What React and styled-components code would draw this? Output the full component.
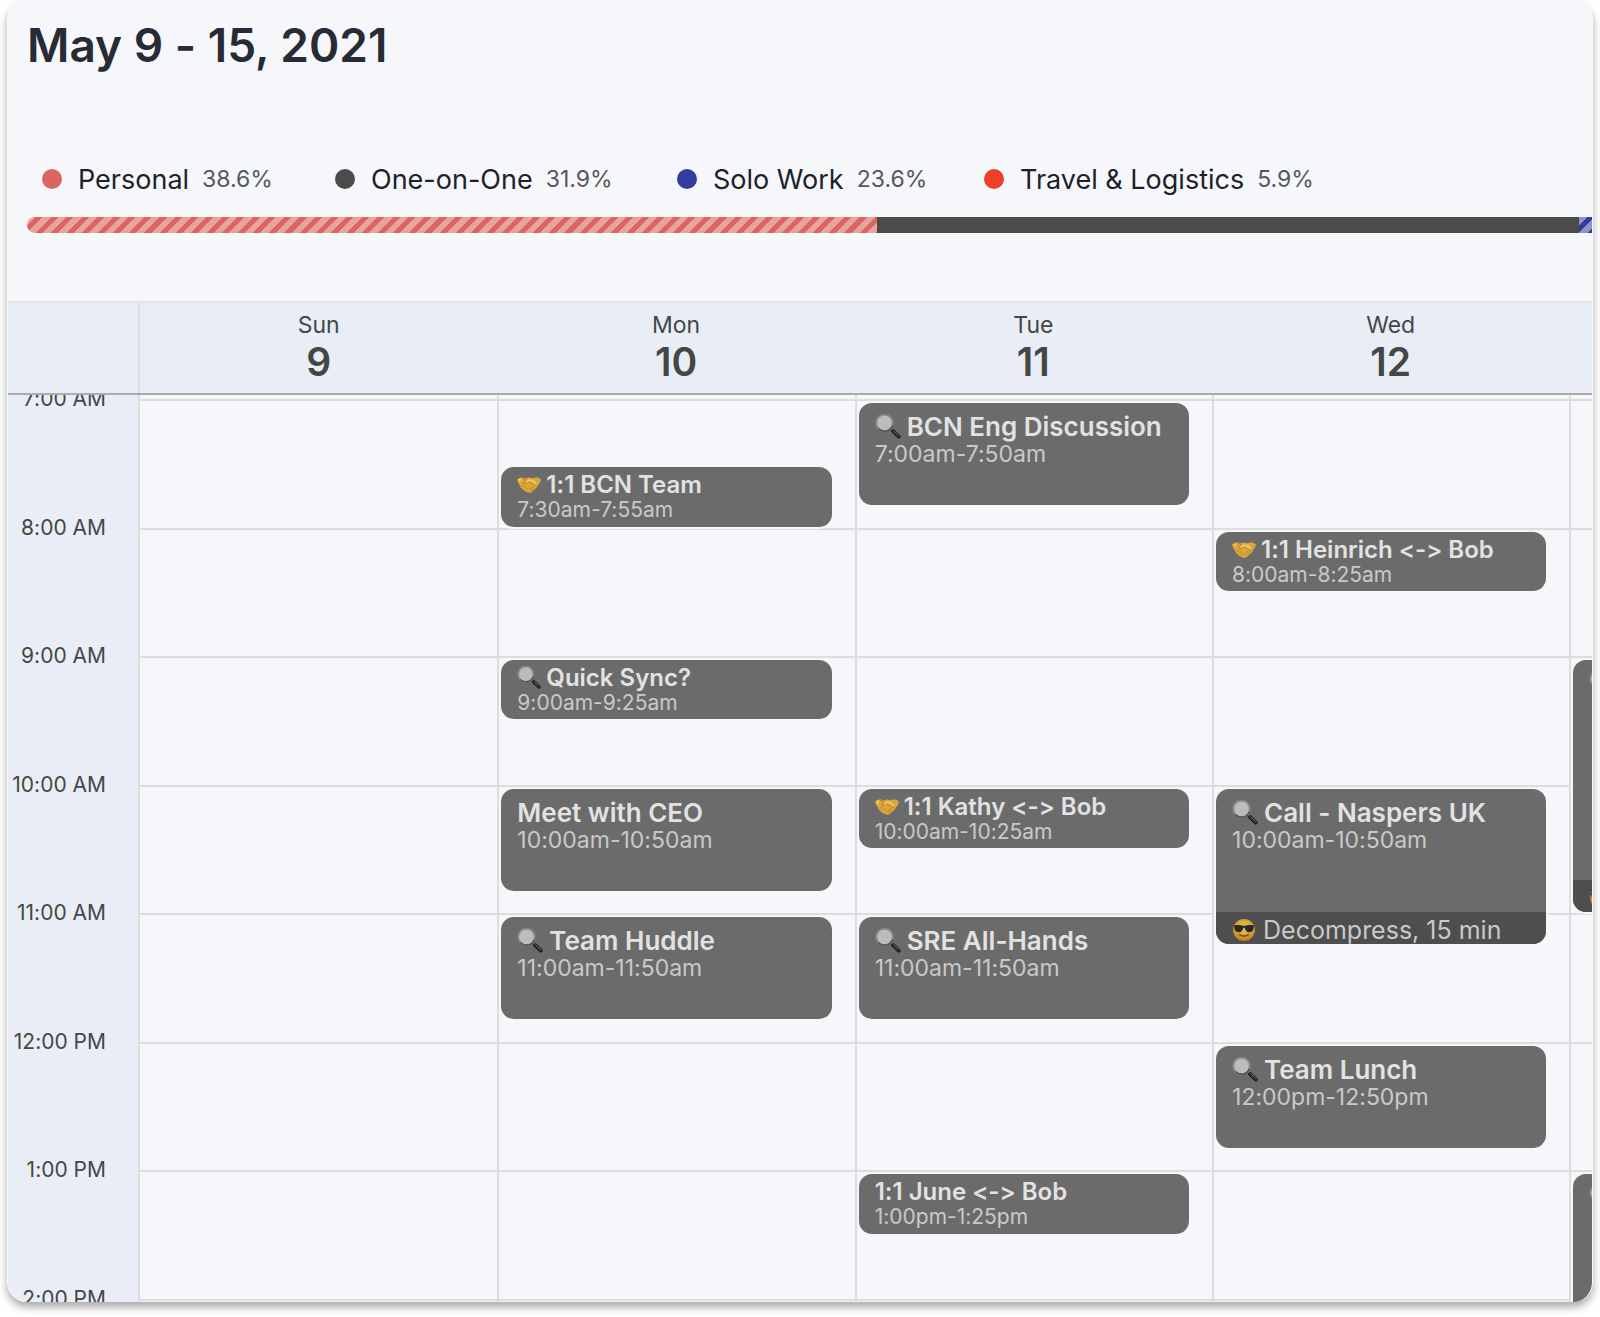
import styled, { createGlobalStyle, css } from "styled-components";

const GlobalStyle = createGlobalStyle`
  *, *::before, *::after {
    box-sizing: border-box;
  }

  body {
    margin: 0;
    background: #fff;
    font-family: Inter, "Open Sans", sans-serif;
    font-variant-ligatures: none;
    color: #444746;
  }
`;

const Page = styled.main`
  padding: 0 7px 16px;
`;

const Card = styled.section`
  overflow: hidden;
  border: solid #fbfbfd;
  border-width: 0 1px;
  border-radius: 20px;
  background: #f6f7fb;
  box-shadow: 0 5px 8px rgba(0, 0, 0, 0.34);
`;

const Title = styled.h1`
  margin: 0;
  padding: 13px 19px 0;
  font-size: 46px;
  font-weight: 600;
  line-height: 64px;
  color: #272b33;
`;

const Legend = styled.ul`
  display: grid;
  grid-template-columns: 293px 342px 307px auto;
  margin: 0;
  padding: 82px 34px 0;
  list-style: none;
`;

const LegendItem = styled.li`
  display: flex;
  align-items: center;
  height: 40px;
  white-space: nowrap;
`;

const Dot = styled.span`
  width: 20px;
  height: 20px;
  margin-right: 16px;
  border-radius: 50%;
  background: ${({ $color }) => $color};
`;

const LegendName = styled.span`
  margin-right: 13px;
  font-size: 27px;
  color: #1d2129;
`;

const LegendShare = styled.span`
  font-size: 23px;
  color: #55585a;
`;

const Bar = styled.div`
  display: flex;
  width: 139%;
  height: 16px;
  margin: 18px 0 68px 19px;
  overflow: hidden;
  border-radius: 8px;
`;

const BarPart = styled.div`
  flex: ${({ $share }) => $share} 0 0;
  background: ${({ $color }) => $color};

  ${({ $stripe, $color }) =>
    $stripe &&
    css`
      background: repeating-linear-gradient(
        135deg,
        ${$stripe} 0 6px,
        ${$color} 6px 11px
      );
    `}
`;

const weekColumns = css`
  display: grid;
  grid-template-columns: 130px calc(22.56% + 2px) repeat(4, 22.56%);
`;

const WeekHeader = styled.header`
  ${weekColumns}
  border-top: 2px solid #e2e4e8;
  border-bottom: 2px solid #a9abac;
  background: #e9eef6;
`;

const DayHeader = styled.div`
  height: 90px;
  padding-top: 8px;
  text-align: center;

  &:nth-child(2) {
    border-left: 2px solid #dcdddf;
  }
`;

const DayName = styled.div`
  font-size: 23px;
  line-height: 28px;
`;

const DayNumber = styled.div`
  font-size: 39px;
  font-weight: 600;
  line-height: 46px;
`;

const WeekBody = styled.div`
  ${weekColumns}
  height: 907px;
  overflow: hidden;
`;

// one row for every five minutes from 7:00 to 14:00, then the clipped hour below
const fiveMinuteRows = css`
  display: grid;
  grid-template-columns: minmax(0, 1fr);
  grid-template-rows: repeat(84, minmax(0, 1fr)) repeat(12, 11px);
  height: 1036px;
  padding-top: 4px;
`;

const TimeColumn = styled.div`
  ${fiveMinuteRows}
  background: #e9eef6;
`;

const TimeLabel = styled.time`
  grid-row-start: ${({ $row }) => $row};
  height: 32px;
  margin-top: -16px;
  padding-right: 32px;
  font-size: 21px;
  line-height: 32px;
  text-align: right;
  white-space: nowrap;
`;

const DayColumn = styled.div`
  ${fiveMinuteRows}
  border-left: 2px solid #dcdddf;
`;

const HourSlot = styled.div`
  grid-column: 1;
  grid-row: ${({ $row }) => $row} / span 12;
  border-top: 2px solid #dcdddf;
`;

const EventCard = styled.article`
  display: flex;
  flex-direction: column;
  z-index: 1;
  grid-column: 1;
  grid-row: ${({ $row }) => $row} / span ${({ $span }) => $span};
  margin: 4px 23px 1px 2px;
  padding-top: ${({ $short }) => ($short ? 5 : 10)}px;
  overflow: hidden;
  border-radius: 13px;
  background: #6b6b6b;
  box-shadow: 0 0 0 2px #f6f7fb;
  color: #e2e2e2;
  white-space: nowrap;
`;

const EventTitle = styled.h2`
  display: flex;
  align-items: center;
  gap: ${({ $short }) => ($short ? 5 : 6)}px;
  margin: 0;
  padding-left: 16px;
  font-size: ${({ $short }) => ($short ? 24 : 26)}px;
  font-weight: 600;
  line-height: ${({ $short }) => ($short ? 26 : 28)}px;
`;

const EventTime = styled.div`
  padding-left: 16px;
  font-size: ${({ $short }) => ($short ? 21 : 23)}px;
  line-height: ${({ $short }) => ($short ? 24 : 26)}px;
  color: #c9c9c9;
`;

const Buffer = styled.div`
  display: flex;
  align-items: center;
  gap: 8px;
  height: 32px;
  margin-top: auto;
  padding: 4px 0 0 17px;
  background: #4e4e4e;
  font-size: 25px;
  line-height: 28px;
  color: #c9c9c9;
`;

const Icon = styled.svg`
  flex: none;
  width: ${({ $size }) => $size}px;
  height: ${({ $size }) => $size}px;
`;

const Magnifier = ({ size }) => (
  <Icon $size={size} viewBox="0 0 26 26" aria-hidden="true">
    <path d="M15 14l4 4" stroke="#8b9094" strokeWidth="2.4" />
    <path
      d="M18 17l5.8 5.6"
      stroke="#25282b"
      strokeWidth="4"
      strokeLinecap="round"
    />
    <path d="M18.6 16.8l5 4.8" stroke="#6a6f73" strokeWidth="1" />
    <circle cx="9.5" cy="8.8" r="8.4" fill="#bcbcbc" stroke="#7d868d" strokeWidth="2" />
    <path
      d="M3.6 14.8a8.4 8.4 0 0 0 13.8-3"
      fill="none"
      stroke="#4b5157"
      strokeWidth="1.4"
    />
  </Icon>
);

const Handshake = ({ size }) => (
  <Icon $size={size} viewBox="0 0 24 24" aria-hidden="true">
    <path
      d="M0 6.4Q2.4 4.6 5 4.2l4.4 1 2.6-.6 3.4.6 4-1q2.4.4 4.6 2.2-.6 3.6-3 5.6.4 1.6-1.4 2.2-.2 1.6-1.8 1.8-.4 1.6-2 1.8-.8 1.8-2.8 2-2.4.4-4.2-1.4-1.8 0-2.2-1.4-1.6 0-2-1.8-1.6-.4-1.4-2.4Q.6 10.4 0 6.4z"
      fill="#dba63a"
    />
    <path
      d="M4.8 5.2l4.4 1-2.4 3.4q1.2 1.4 3 .6l2.6-1.4 7 4.4M5 13.6l2.2-2M7.4 15.4l2-2M9.8 17l1.8-2M14.2 13.4l3.4 2.4M12.8 15.4l2.8 2"
      fill="none"
      stroke="#b27a1f"
      strokeWidth="0.8"
    />
    <path d="M7.8 9.2l3.2-3 5.4.2 3.2 3.8-.8 1.6-6-3.6-3 1.6z" fill="#ebc560" />
    <path d="M1 6.6q2-1.4 3.6-1.6l-1.4 4.4z" fill="#ebc560" />
  </Icon>
);

const Sunglasses = ({ size }) => (
  <Icon $size={size} viewBox="0 0 22 22" aria-hidden="true">
    <defs>
      <radialGradient id="face" cx="50%" cy="40%" r="60%">
        <stop offset="0.4" stopColor="#dfb53f" />
        <stop offset="1" stopColor="#c17a26" />
      </radialGradient>
    </defs>
    <circle cx="11" cy="11" r="11" fill="url(#face)" />
    <path
      d="M.6 6.4q5-1 10.4.6 5.4-1.6 10.4-.6l-.8 2q-.4 4.8-4.6 4.8-3.4 0-4.2-4.4h-1.6q-.8 4.4-4.2 4.4-4.2 0-4.6-4.8z"
      fill="#26282b"
    />
    <path
      d="M6.6 15.6q4.4 2.8 8.8 0"
      fill="none"
      stroke="#7a4a17"
      strokeWidth="1.4"
      strokeLinecap="round"
    />
  </Icon>
);

const icons = { search: Magnifier, meet: Handshake };

const categories = [
  { name: "Personal", share: 38.6, color: "#dc6560", stripe: "#e7a49f" },
  { name: "One-on-One", share: 31.9, color: "#4b4b4b" },
  { name: "Solo Work", share: 23.6, color: "#323c9f", stripe: "#8f95cb" },
  { name: "Travel & Logistics", share: 5.9, color: "#ee4026" },
];

const hours = [
  "7:00 AM",
  "8:00 AM",
  "9:00 AM",
  "10:00 AM",
  "11:00 AM",
  "12:00 PM",
  "1:00 PM",
  "2:00 PM",
];

// start is minutes after 7:00
const days = [
  { name: "Sun", number: 9, events: [] },
  {
    name: "Mon",
    number: 10,
    events: [
      { start: 30, length: 25, icon: "meet", title: "1:1 BCN Team", time: "7:30am-7:55am" },
      { start: 120, length: 25, icon: "search", title: "Quick Sync?", time: "9:00am-9:25am" },
      { start: 180, length: 50, title: "Meet with CEO", time: "10:00am-10:50am" },
      { start: 240, length: 50, icon: "search", title: "Team Huddle", time: "11:00am-11:50am" },
    ],
  },
  {
    name: "Tue",
    number: 11,
    events: [
      { start: 0, length: 50, icon: "search", title: "BCN Eng Discussion", time: "7:00am-7:50am" },
      { start: 180, length: 25, icon: "meet", title: "1:1 Kathy <-> Bob", time: "10:00am-10:25am" },
      { start: 240, length: 50, icon: "search", title: "SRE All-Hands", time: "11:00am-11:50am" },
      { start: 360, length: 25, title: "1:1 June <-> Bob", time: "1:00pm-1:25pm" },
    ],
  },
  {
    name: "Wed",
    number: 12,
    events: [
      { start: 60, length: 25, icon: "meet", title: "1:1 Heinrich <-> Bob", time: "8:00am-8:25am" },
      {
        start: 180,
        length: 75,
        icon: "search",
        title: "Call - Naspers UK",
        time: "10:00am-10:50am",
        buffer: "Decompress, 15 min",
      },
      { start: 300, length: 50, icon: "search", title: "Team Lunch", time: "12:00pm-12:50pm" },
    ],
  },
  {
    events: [
      { start: 120, length: 120, icon: "search", buffer: " " },
      { start: 360, length: 90, icon: "search" },
    ],
  },
];

const CalendarEvent = ({ event }) => {
  const short = event.length < 30;
  const EventIcon = icons[event.icon];

  return (
    <EventCard
      $row={event.start / 5 + 1}
      $span={Math.max(event.length, 30) / 5}
      $short={short}
    >
      <EventTitle $short={short}>
        {EventIcon && <EventIcon size={short ? 24 : 26} />}
        {event.title}
      </EventTitle>
      <EventTime $short={short}>{event.time}</EventTime>
      {event.buffer && (
        <Buffer>
          <Sunglasses size={22} />
          {event.buffer}
        </Buffer>
      )}
    </EventCard>
  );
};

const App = () => {
  return (
    <>
      <GlobalStyle />
      <Page>
        <Card>
          <Title>May 9 - 15, 2021</Title>
          <Legend>
            {categories.map(({ name, share, color }) => (
              <LegendItem key={name}>
                <Dot $color={color} />
                <LegendName>{name}</LegendName>
                <LegendShare>{share}%</LegendShare>
              </LegendItem>
            ))}
          </Legend>
          <Bar>
            {categories.map(({ name, share, color, stripe }) => (
              <BarPart key={name} $share={share} $color={color} $stripe={stripe} />
            ))}
          </Bar>
          <WeekHeader>
            <div />
            {days.map(({ name, number }, i) => (
              <DayHeader key={i}>
                <DayName>{name}</DayName>
                <DayNumber>{number}</DayNumber>
              </DayHeader>
            ))}
          </WeekHeader>
          <WeekBody>
            <TimeColumn>
              {hours.map((hour, i) => (
                <TimeLabel key={hour} $row={i * 12 + 1}>
                  {hour}
                </TimeLabel>
              ))}
            </TimeColumn>
            {days.map(({ events }, i) => (
              <DayColumn key={i}>
                {hours.map((hour, h) => (
                  <HourSlot key={hour} $row={h * 12 + 1} />
                ))}
                {events.map((event) => (
                  <CalendarEvent key={event.start} event={event} />
                ))}
              </DayColumn>
            ))}
          </WeekBody>
        </Card>
      </Page>
    </>
  );
};

export default App;
